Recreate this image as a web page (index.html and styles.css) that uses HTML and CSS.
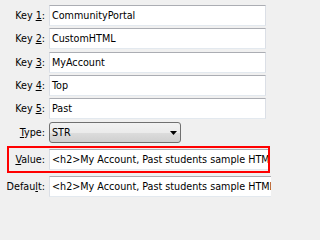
FILE: index.html
```html
<!DOCTYPE html>
<html>
<head>
<meta charset="utf-8">
<link rel="stylesheet" href="styles.css">
</head>
<body>
<div class="form">
  <div class="row"><label class="lbl">Key <u>1</u>:</label><div class="field">CommunityPortal</div></div>
  <div class="row"><label class="lbl">Key <u>2</u>:</label><div class="field">CustomHTML</div></div>
  <div class="row"><label class="lbl">Key <u>3</u>:</label><div class="field">MyAccount</div></div>
  <div class="row"><label class="lbl">Key <u>4</u>:</label><div class="field">Top</div></div>
  <div class="row"><label class="lbl">Key <u>5</u>:</label><div class="field">Past</div></div>
  <div class="row"><label class="lbl"><u>T</u>ype:</label>
    <div class="select"><span>STR</span><svg class="arrow" width="7" height="4" viewBox="0 0 7 4"><path d="M0 0H7L3.5 4Z" fill="#000"/></svg></div>
  </div>
  <div class="row"><div class="highlight"><label class="lbl inner"><u>V</u>alue:</label><div class="field long">&lt;h2&gt;My Account, Past students sample HTML</div></div></div>
  <div class="row"><label class="lbl">Defau<u>l</u>t:</label><div class="field long">&lt;h2&gt;My Account, Past students sample HTML</div></div>
</div>
</body>
</html>
```

FILE: styles.css
```css
html, body {
  margin: 0;
  padding: 0;
  background: #f0f0f0;
  overflow: hidden;
}
body {
  width: 271px;
  height: 201px;
  font-family: "DejaVu Sans Condensed", "DejaVu Sans", sans-serif;
  font-stretch: condensed;
  font-size: 10.7px;
  color: #000;
}
.form {
  display: grid;
  grid-template-rows: 23px 24px 23px 23px 24px 24px 30px 21px;
  padding-top: 5px;
}
.row {
  display: flex;
  align-items: flex-start;
  overflow: visible;
}
.lbl {
  width: 45px;
  margin-right: 4px;
  text-align: right;
  line-height: 21px;
  white-space: nowrap;
  flex: none;
}
.lbl.inner {
  width: 36px;
}
.field {
  box-sizing: border-box;
  width: 217px;
  height: 21px;
  line-height: 19px;
  padding: 0 2px;
  background: #fff;
  border: 1px solid #dbdfe6;
  border-top-color: #abadb3;
  border-bottom-color: #e3e9ef;
  white-space: nowrap;
  overflow: hidden;
  flex: none;
}
.field.long {
  width: 240px;
}
.select {
  box-sizing: border-box;
  width: 132px;
  height: 21px;
  border: 1px solid #707070;
  border-radius: 3px;
  background: linear-gradient(#f2f2f2 0%, #ebebeb 50%, #dddddd 50%, #cfcfcf 100%);
  display: flex;
  align-items: center;
  justify-content: space-between;
  padding: 0 3px 0 2px;
  flex: none;
}
.select span {
  line-height: 19px;
}
.arrow {
  display: block;
}
.highlight {
  box-sizing: border-box;
  margin-left: 7px;
  width: 263px;
  height: 27px;
  border: 2px solid #ff0000;
  padding: 1px 0;
  display: flex;
  align-items: flex-start;
  overflow: hidden;
}
```
